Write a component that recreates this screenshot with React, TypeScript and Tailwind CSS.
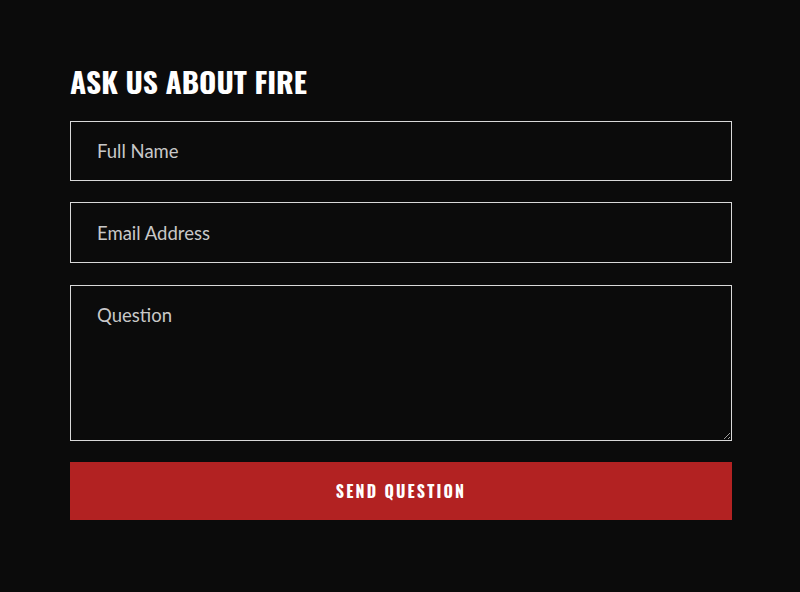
export default function App() {
  const field =
    "w-full border border-[#d9d9d9] bg-[#0b0b0b] px-[26px] text-[18.5px] text-[#cfcfcf] placeholder:text-[#c8c8c8] outline-none font-['Lato',sans-serif]";

  return (
    <div className="min-h-[592px] w-[800px] bg-[#0b0b0b] pt-[61px]">
      <form
        onSubmit={(e) => e.preventDefault()}
        className="ml-[70px] flex w-[662px] flex-col"
      >
        <h2 className="mb-[20px] text-[29.5px] leading-[40px] font-bold text-white font-['Oswald',sans-serif] uppercase whitespace-nowrap">
          Ask Us About Fire
        </h2>
        <input type="text" placeholder="Full Name" className={`${field} h-[60px]`} />
        <input
          type="email"
          placeholder="Email Address"
          className={`${field} mt-[21px] h-[61px]`}
        />
        <textarea
          placeholder="Question"
          className={`${field} mt-[22px] h-[156px] pt-[16px] resize-y`}
        />
        <button
          type="submit"
          className="mt-[21px] h-[58px] w-full bg-[#b22222] text-[16px] font-bold tracking-[0.135em] text-white uppercase font-['Oswald',sans-serif]"
        >
          Send Question
        </button>
      </form>
    </div>
  );
}
